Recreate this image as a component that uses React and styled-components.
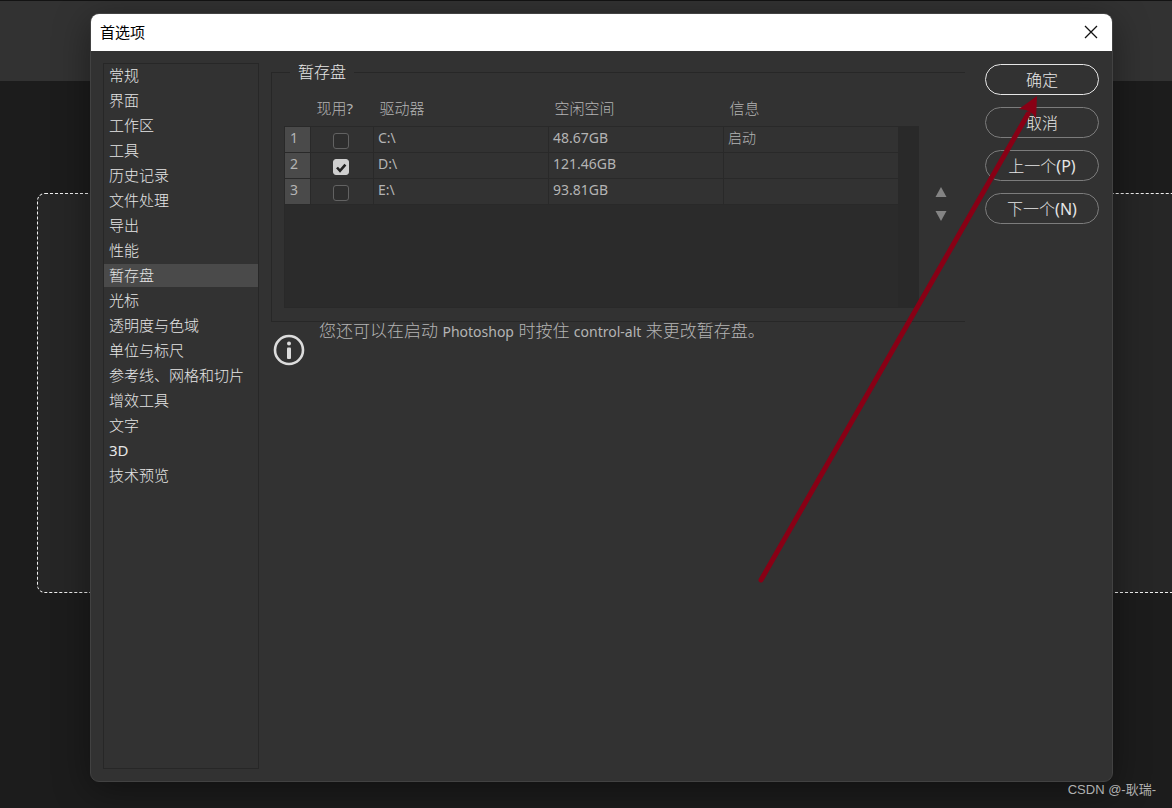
import React, { useState } from "react";
import styled, { createGlobalStyle } from "styled-components";

const GlobalStyle = createGlobalStyle`
  * {
    box-sizing: border-box;
  }
  body {
    margin: 0;
    background: #1c1c1c;
    color: #e6e6e6;
    font-family: "Noto Sans", "Noto Sans CJK SC Light", "Noto Sans CJK SC", sans-serif;
    font-size: 14px;
  }
  button, input {
    font: inherit;
    color: inherit;
    margin: 0;
  }
`;

const Desktop = styled.div`
  position: relative;
  display: flex;
  flex-direction: column;
  min-height: 100vh;
  overflow: hidden;
`;

const OptionsBar = styled.div`
  height: 81px;
  background: #323232;
  border-top: 1px solid #131313;
`;

const DropZone = styled.div`
  height: 400px;
  margin: 112px 0 0 37px;
  background: #262626;
  border: 1px dashed #f0f0f0;
  border-right: 0;
  border-radius: 8px 0 0 8px;
`;

const Dialog = styled.section`
  position: absolute;
  inset: 13px 59px 26px 90px;
  display: flex;
  flex-direction: column;
  background: #323232;
  border: 1px solid #424242;
  border-radius: 9px;
  box-shadow: 0 8px 36px rgba(0, 0, 0, 0.4);
`;

const TitleBar = styled.header`
  display: flex;
  align-items: center;
  justify-content: space-between;
  height: 37px;
  padding: 0 14px 2px 9px;
  background: #fff;
  color: #000;
  border-radius: 8px 8px 0 0;
`;

const Title = styled.h1`
  margin: 0;
  font-family: "Noto Sans CJK SC", sans-serif;
  font-size: 15px;
  font-weight: 400;
`;

const CloseButton = styled.button`
  display: flex;
  padding: 0;
  border: 0;
  background: none;
`;

const Body = styled.div`
  flex: 1;
  display: flex;
  gap: 12px;
  padding: 12px 13px 12px 12px;
`;

const Sidebar = styled.nav`
  display: flex;
  flex-direction: column;
  gap: 2px;
  width: 156px;
  border: 1px solid #272727;
`;

const SidebarItem = styled.button`
  height: 23px;
  padding: 0 5px;
  border: 0;
  background: ${props => (props.$active ? "#4a4a4a" : "none")};
  font-size: 15px;
  line-height: 21px;
  text-align: left;
  white-space: nowrap;
`;

const Panel = styled.main`
  flex: 1;
  min-width: 0;
`;

const Group = styled.fieldset`
  display: flex;
  align-items: flex-start;
  gap: 16px;
  min-width: 0;
  margin: 0;
  padding: 9px 18px 13px 12px;
  border: 1px solid #272727;
  border-right: 0;
`;

const Legend = styled.legend`
  margin-left: 6px;
  padding: 0 8px;
  font-size: 16px;
  line-height: 18px;
`;

const DiskList = styled.div`
  flex: 1;
  display: flex;
`;

const DiskTable = styled.table`
  flex: 1;
  table-layout: fixed;
  border-collapse: collapse;
  color: #b4b4b4;
`;

const HeadCell = styled.th`
  width: ${props => props.$width || "auto"};
  height: 36px;
  padding: 0 6px;
  font-size: 15px;
  font-weight: 400;
  text-align: left;
  white-space: nowrap;
`;

const Cell = styled.td`
  height: 26px;
  padding: 0 4px 2px;
  border: 1px solid #292929;
  line-height: 20px;
`;

const NumberCell = styled(Cell)`
  padding: 0 5px 2px;
  background: #4a4a4a;
`;

const CheckCell = styled(Cell)`
  padding: 4px 2px 0 0;
  line-height: 16px;
  text-align: center;
`;

const EmptyCell = styled.td`
  height: 103px;
  background: #2b2b2b;
  border: 1px solid #292929;
`;

const Gutter = styled.div`
  width: 20px;
  margin-top: 36px;
  background: #292929;
`;

const Checkbox = styled.input`
  appearance: none;
  display: inline-block;
  width: 16px;
  height: 16px;
  vertical-align: top;
  border: 1px solid #626262;
  border-radius: 3px;
  background: #2e2e2e;
  &:checked {
    border-color: #cfcfcf;
    background: #cfcfcf
      url("data:image/svg+xml,%3Csvg xmlns='http://www.w3.org/2000/svg' viewBox='0 0 14 14'%3E%3Cpath d='M3 7.5 6 10.8 11.4 4.6' fill='none' stroke='%23222' stroke-width='2.6'/%3E%3C/svg%3E");
  }
`;

const Sorter = styled.div`
  display: flex;
  flex-direction: column;
  gap: 12px;
  margin-top: 96px;
`;

const SortButton = styled.button`
  display: flex;
  padding: 0;
  border: 0;
  background: none;
`;

const Hint = styled.div`
  display: flex;
  gap: 14px;
  padding-left: 2px;
`;

const HintIcon = styled.svg`
  margin-top: 12px;
`;

const HintText = styled.p`
  margin: 0;
  color: #b4b4b4;
  font-size: 17px;
  line-height: 18px;
`;

const Latin = styled.span`
  font-size: 14px;
`;

const Actions = styled.div`
  display: flex;
  flex-direction: column;
  gap: 12px;
  width: 114px;
  margin-left: 8px;
  padding-top: 1px;
`;

const ActionButton = styled.button`
  height: 31px;
  padding: 0;
  border: ${props => (props.$primary ? "1px solid #e6e6e6" : "1px solid #7c7c7c")};
  border-radius: 16px;
  background: none;
  font-size: 16px;
  line-height: 28px;
`;

const Pointer = styled.svg`
  position: absolute;
  top: 82px;
  right: 70px;
  pointer-events: none;
`;

const Watermark = styled.span`
  position: absolute;
  right: 16px;
  bottom: 8px;
  color: #b0b0b0;
  font-family: "Liberation Sans", "Noto Sans CJK SC", sans-serif;
  font-size: 13px;
  line-height: 20px;
`;

const sections = [
  "常规",
  "界面",
  "工作区",
  "工具",
  "历史记录",
  "文件处理",
  "导出",
  "性能",
  "暂存盘",
  "光标",
  "透明度与色域",
  "单位与标尺",
  "参考线、网格和切片",
  "增效工具",
  "文字",
  "3D",
  "技术预览"
];

const disks = [
  { drive: "C:\\", free: "48.67GB", info: "启动", used: false },
  { drive: "D:\\", free: "121.46GB", info: "", used: true },
  { drive: "E:\\", free: "93.81GB", info: "", used: false }
];

const Disks = () => (
  <DiskList>
    <DiskTable>
      <thead>
        <tr>
          <HeadCell $width="26px" />
          <HeadCell $width="63px">现用?</HeadCell>
          <HeadCell $width="175px">驱动器</HeadCell>
          <HeadCell $width="175px">空闲空间</HeadCell>
          <HeadCell>信息</HeadCell>
        </tr>
      </thead>
      <tbody>
        {disks.map((disk, index) => (
          <tr key={disk.drive}>
            <NumberCell>{index + 1}</NumberCell>
            <CheckCell>
              <Checkbox
                type="checkbox"
                defaultChecked={disk.used}
                aria-label={disk.drive}
              />
            </CheckCell>
            <Cell>{disk.drive}</Cell>
            <Cell>{disk.free}</Cell>
            <Cell>{disk.info}</Cell>
          </tr>
        ))}
        <tr>
          <EmptyCell colSpan={5} />
        </tr>
      </tbody>
    </DiskTable>
    <Gutter />
  </DiskList>
);

const App = () => {
  const [active, setActive] = useState("暂存盘");

  return (
    <Desktop>
      <GlobalStyle />
      <OptionsBar />
      <DropZone />
      <Dialog role="dialog" aria-labelledby="title">
        <TitleBar>
          <Title id="title">首选项</Title>
          <CloseButton aria-label="关闭">
            <svg width="14" height="14" viewBox="0 0 14 14">
              <path d="M1 1 13 13M13 1 1 13" stroke="#111" strokeWidth="1.3" />
            </svg>
          </CloseButton>
        </TitleBar>
        <Body>
          <Sidebar>
            {sections.map(name => (
              <SidebarItem
                key={name}
                $active={name === active}
                onClick={() => setActive(name)}
              >
                {name}
              </SidebarItem>
            ))}
          </Sidebar>
          <Panel>
            <Group>
              <Legend>暂存盘</Legend>
              <Disks />
              <Sorter>
                <SortButton aria-label="上移">
                  <svg width="12" height="12" viewBox="0 0 12 12">
                    <path d="M6 1 11.5 11H.5z" fill="#848484" />
                  </svg>
                </SortButton>
                <SortButton aria-label="下移">
                  <svg width="12" height="12" viewBox="0 0 12 12">
                    <path d="M6 11 11.5 1H.5z" fill="#848484" />
                  </svg>
                </SortButton>
              </Sorter>
            </Group>
            <Hint>
              <HintIcon width="32" height="32" viewBox="0 0 32 32">
                <circle cx="16" cy="16" r="14" fill="none" stroke="#dcdcdc" strokeWidth="2.6" />
                <circle cx="16" cy="9.5" r="2" fill="#dcdcdc" />
                <rect x="14" y="13.5" width="4" height="11.5" rx="1" fill="#dcdcdc" />
              </HintIcon>
              <HintText>
                您还可以在启动 <Latin>Photoshop</Latin> 时按住 <Latin>control-alt</Latin> 来更改暂存盘。
              </HintText>
            </Hint>
          </Panel>
          <Actions>
            <ActionButton $primary>确定</ActionButton>
            <ActionButton>取消</ActionButton>
            <ActionButton>上一个(P)</ActionButton>
            <ActionButton>下一个(N)</ActionButton>
          </Actions>
        </Body>
        <Pointer width="286" height="490" viewBox="0 0 286 490">
          <path d="M5 484 272 18" stroke="#880015" strokeWidth="5" strokeLinecap="round" />
          <path d="M281 0 263 13 270 14 277 18 280 23z" fill="#880015" />
        </Pointer>
      </Dialog>
      <Watermark>CSDN @-耿瑞-</Watermark>
    </Desktop>
  );
};

export default App;
